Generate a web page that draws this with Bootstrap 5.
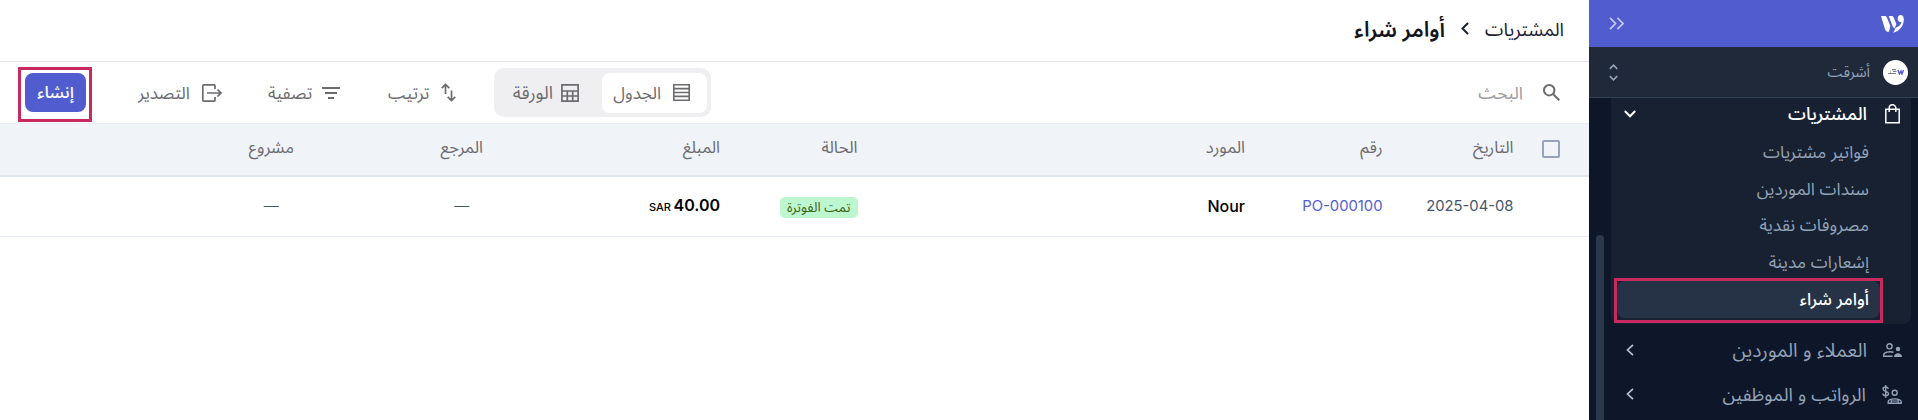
<!DOCTYPE html>
<html lang="ar" dir="rtl">

<head>
    <meta charset="UTF-8">
    <meta name="viewport" content="width=device-width, initial-scale=1.0">
    <title>أوامر شراء</title>
    <link href="https://cdn.jsdelivr.net/npm/bootstrap@5.3.2/dist/css/bootstrap.min.css" rel="stylesheet">
    <style>
        body {
            height: 420px;
            overflow: hidden;
            background: #fff;
            font-family: Inter, "Noto Sans Arabic", "DejaVu Sans", sans-serif;
            font-size: 17px;
            line-height: 24px;
            color: #6b6b70;
        }
        svg { display: block; flex-shrink: 0; }
        a { text-decoration: none; color: inherit; white-space: nowrap; }

        /* Sidebar */
        .sidebar { width: 329px; background: #0e1729; color: #94a3b8; }
        .brand-bar { height: 47px; background: #515dce; padding: 0 14px 0 20px; }
        .company { height: 51px; background: #1f293a; border-bottom: 1px solid #334155; padding: 0 10px 0 20px; }
        .company-logo { width: 25px; height: 25px; background: #fff; border-radius: 50%; margin-left: 13px; }
        .company-name { font-size: 14.5px; }
        .side-menu { width: 307px; }
        .thumb { width: 8px; margin: 137px 7px 0 0; background: #2b374a; border-radius: 4px 4px 0 0; }
        .open-group { height: 226px; margin-right: 7px; background: #172132; border-radius: 0 0 8px 8px; }
        .group-title { height: 32px; padding: 0 11px 0 13px; margin-bottom: 4px; color: #fff; font-size: 18px; font-weight: 500; }
        .group-name { margin-right: 18px; }
        .sub-item { height: 36.6px; padding-right: 42px; font-size: 17.1px; }
        .marked-item { width: 269px; height: 45px; border: 3px solid #c82a5f; margin: -2px 28px 0 0; }
        .active-item { height: 37px; padding: 0 11px 2px 0; border-radius: 8px; background: #263245; color: #fff; font-weight: 500; }
        .closed-group { height: 44px; padding: 0 16px 0 15px; font-size: 19.2px; }
        .closed-group-payroll { font-size: 18.4px; }

        /* Page header */
        .crumbs { height: 62px; border-bottom: 1px solid #e3e5ef; padding: 0 25px 4px; color: #1d2030; }
        .crumb-parent { font-size: 18.6px; }
        .crumb-current { font-size: 21.4px; font-weight: 600; color: #14161f; }

        /* Toolbar */
        .toolbar { height: 61px; padding: 0 29px 0 18px; }
        .search { color: #9b9ba0; margin-right: 20px; font-size: 17.4px; }
        .segment { width: 217px; height: 49px; padding: 0 4px 0 0; background: #efeff1; border-radius: 10px; margin-left: 38px; }
        .segment-on { width: 105px; height: 40px; padding-right: 17px; background: #fff; border-radius: 8px; }
        .segment-off { padding-right: 23px; font-size: 18px; }
        .create-frame { width: 74px; height: 55px; border: 3px solid #c82a5f; padding: 3px 3px 7px 4px; margin-top: 4px; }
        .btn-create { width: 61px; height: 39px; padding: 0; border-radius: 8px; background: #515dce; color: #fff; font-size: 17px; font-weight: 500; }
        .tool-sort { width: 68px; margin-left: 48px; }
        .tool-filter { width: 72px; margin-left: 46px; }
        .tool-export { width: 84px; margin-left: 46px; }

        /* Orders table */
        .orders { table-layout: fixed; width: 100%; white-space: nowrap; }
        .orders th { height: 52px; padding: 0 0 4px; background: #f0f3f8; border-top: 1px solid #e8edf3; border-bottom: 2px solid #dfe6ee; font-size: 16.6px; font-weight: 400; line-height: 20px; }
        .orders td { height: 61px; padding: 0 0 1px; border-bottom: 1px solid #e6ecf2; }
        .check-box { width: 18px; height: 18px; border: 2px solid #97a3b8; border-radius: 2px; margin: 4px 29px 0 0; }
        .date { font-size: 14.8px; color: #475569; }
        .number { font-size: 14.8px; color: #5560d0; }
        .supplier { font-size: 16px; font-weight: 500; color: #000; }
        .status { height: 21px; padding: 0 7px; border-radius: 5px; background: #bcf7d0; color: #3f6212; font-size: 13.300px; line-height: 21px; }
        .amount { font-size: 16px; font-weight: 600; color: #000; word-spacing: -1.500px; }
        .currency { font-size: 11px; font-weight: 500; }
        .orders .dash { font-size: 15px; font-weight: 300; color: #475569; }
    </style>
</head>

<body class="d-flex">

    <!-- Sidebar -->
    <aside class="sidebar d-flex flex-column flex-shrink-0 h-100">
        <div class="brand-bar d-flex align-items-center justify-content-between">
            <svg width="23" height="18" viewBox="0 0 23 18" fill="#fff">
                <path d="M0 1h3.500c1.300 0 2 .6 2.500 1.700L9.300 11 8 16.800C5.600 17 4.600 15.800 4 14.200z" />
                <path d="M7.700 1h2.800c1.200 0 1.900.6 2.300 1.700l2.600 6.500-2 4.300-1.700-2z" />
                <path d="M19.500 0C22 0 23 2 22.800 5c-.3 6-4 11-10.800 12.800 1.200-1.500 2-3.200 2.700-5.300 3.300-.7 5.300-2.700 5.800-5.700-2 .8-3.900-.7-3.900-3C16.600 1.600 17.800 0 19.500 0z" />
            </svg>
            <svg width="15" height="13" viewBox="0 0 15 13" fill="none" stroke="#c3c9f5" stroke-width="1.700">
                <path d="M1 .8 6.600 6.500 1 12.200M8.400.8 14 6.500 8.400 12.200" />
            </svg>
        </div>
        <div class="company d-flex align-items-center flex-shrink-0">
            <div class="company-logo d-flex align-items-center justify-content-center">
                <svg width="16" height="6" viewBox="0 0 16 6" fill="none">
                    <path d="M10 1l1.500 4L13 2l1 3 1.500-4" stroke="#515dce" stroke-width="1.400" />
                    <path d="M0 4.500h8M2 3h1M4 .7h4M5 2.500h3.500" stroke="#7a7f8c" stroke-width="1.200" />
                </svg>
            </div>
            <a href="#" class="company-name">أشرقت</a>
            <svg class="me-auto" width="9" height="17" viewBox="0 0 9 17" fill="none" stroke="#94a3b8" stroke-width="1.700">
                <path d="M.8 4.800 4.500 1.200 8.200 4.800M.8 12.200 4.500 15.800 8.200 12.200" />
            </svg>
        </div>
        <div class="d-flex flex-grow-1">
            <nav class="side-menu">
                <div class="open-group">
                    <div class="group-title d-flex align-items-center">
                        <svg width="15" height="20" viewBox="0 0 15 20" fill="none" stroke="#fff" stroke-width="1.500">
                            <path d="M.8 5.200h13.400v13.600H.8zM4.200 8V4a3.300 3.300 0 0 1 6.600 0v4" />
                        </svg>
                        <a href="#" class="group-name">المشتريات</a>
                        <svg class="me-auto" width="12" height="8" viewBox="0 0 12 8" fill="none" stroke="#fff" stroke-width="2">
                            <path d="M.8 1 6 6.300 11.200 1" />
                        </svg>
                    </div>
                    <div class="sub-item d-flex align-items-center"><a href="#">فواتير مشتريات</a></div>
                    <div class="sub-item d-flex align-items-center"><a href="#">سندات الموردين</a></div>
                    <div class="sub-item d-flex align-items-center"><a href="#">مصروفات نقدية</a></div>
                    <div class="sub-item d-flex align-items-center"><a href="#">إشعارات مدينة</a></div>
                    <div class="marked-item">
                        <div class="active-item d-flex align-items-center"><a href="#">أوامر شراء</a></div>
                    </div>
                </div>
                <div class="closed-group d-flex align-items-center mt-1">
                    <svg width="19" height="14" viewBox="0 0 19 14" fill="none" stroke="#94a3b8" stroke-width="1.400">
                        <circle cx="6.500" cy="3.300" r="2.600" />
                        <path d="M10.500 9.200C6 8 .7 9.400.7 12v1.200h8.800" />
                        <circle cx="15" cy="6" r="2.200" fill="#94a3b8" stroke="none" />
                        <path d="M11 14c0-5 8-5 8 0z" fill="#94a3b8" stroke="none" />
                    </svg>
                    <a href="#" class="me-3">العملاء و الموردين</a>
                    <svg class="me-auto" width="8" height="12" viewBox="0 0 8 12" fill="none" stroke="#b6c1d1" stroke-width="1.700">
                        <path d="M7 .8 1.500 6 7 11.200" />
                    </svg>
                </div>
                <div class="closed-group closed-group-payroll d-flex align-items-center">
                    <svg width="20" height="19" viewBox="0 0 20 19" fill="none" stroke="#94a3b8" stroke-width="1.400">
                        <path d="M6.200 4C5.800 1.300 1 1.300 1 4S6.500 6 6.500 8.700 1.200 11.300.8 8.700M3.700 0v12.700" />
                        <circle cx="12.700" cy="7.800" r="2.500" />
                        <path d="M6.200 18.200v-1.500c0-3.800 13-3.800 13 0v1.500z" />
                        <path d="M9.200 18v-3M16.200 18v-3M9.200 16h7" stroke-width="1.200" />
                    </svg>
                    <a href="#" class="me-3">الرواتب و الموظفين</a>
                    <svg class="me-auto" width="8" height="12" viewBox="0 0 8 12" fill="none" stroke="#b6c1d1" stroke-width="1.700">
                        <path d="M7 .8 1.500 6 7 11.200" />
                    </svg>
                </div>
            </nav>
            <div class="thumb"></div>
        </div>
    </aside>

    <!-- Purchase orders -->
    <main class="flex-grow-1">
        <div class="crumbs d-flex align-items-center">
            <a href="#" class="crumb-parent">المشتريات</a>
            <svg class="mx-3" width="8" height="13" viewBox="0 0 8 13" fill="none" stroke="#1d2030" stroke-width="2">
                <path d="M7 1 1.500 6.500 7 12" />
            </svg>
            <span class="crumb-current ms-auto">أوامر شراء</span>
        </div>

        <div class="toolbar d-flex align-items-center">
            <svg width="17" height="17" viewBox="0 0 17 17" fill="none" stroke="#6b6b70" stroke-width="2">
                <circle cx="6.200" cy="6.200" r="5.200" />
                <path d="M10 10l6.300 6.300" />
            </svg>
            <span class="search">البحث</span>

            <div class="segment d-flex align-items-center me-auto">
                <a href="#" class="segment-on d-flex align-items-center">
                    <svg width="17" height="17" viewBox="0 0 17 17" fill="none" stroke="#6b6b70" stroke-width="1.600">
                        <path d="M.8.8h15.400v15.400H.8zM1 4.600h15M1 8.500h15M1 12.400h15" />
                    </svg>
                    <span class="me-2 pe-1">الجدول</span>
                </a>
                <a href="#" class="segment-off d-flex align-items-center">
                    <svg width="18" height="18" viewBox="0 0 18 18" fill="none" stroke="#6b6b70" stroke-width="1.700">
                        <path d="M.9.9h16.200v16.200H.9zM1 7h16M1 12h16M6.300 7v10M11.700 7v10" />
                    </svg>
                    <span class="me-2">الورقة</span>
                </a>
            </div>

            <a href="#" class="tool-sort d-flex align-items-center justify-content-between">
                <svg width="15" height="19" viewBox="0 0 15 19" fill="none" stroke="#6b6b70" stroke-width="1.700">
                    <path d="M4.500 11V1.500M.7 5.200l3.800-3.800 3.800 3.800M10.500 7.500v10M6.700 13.800l3.800 3.800 3.800-3.800" />
                </svg>
                <span>ترتيب</span>
            </a>
            <a href="#" class="tool-filter d-flex align-items-center justify-content-between">
                <svg width="18" height="12" viewBox="0 0 18 12" fill="none" stroke="#6b6b70" stroke-width="1.800">
                    <path d="M0 1h18M3 6h12M6 11h6" />
                </svg>
                <span>تصفية</span>
            </a>
            <a href="#" class="tool-export d-flex align-items-center justify-content-between">
                <svg width="20" height="18" viewBox="0 0 20 18" fill="none" stroke="#6b6b70" stroke-width="1.700">
                    <path d="M13 5V2a1.200 1.200 0 0 0-1.200-1.200H2A1.200 1.200 0 0 0 .8 2v14A1.200 1.200 0 0 0 2 17.200h9.800A1.200 1.200 0 0 0 13 16v-3M5 9h14M15.500 5.500 19 9l-3.500 3.500" />
                </svg>
                <span>التصدير</span>
            </a>
            <div class="create-frame">
                <button type="button" class="btn btn-create d-block">إنشاء</button>
            </div>
        </div>

        <table class="orders">
            <colgroup>
                <col style="width: 75.5px">
                <col style="width: 131px">
                <col style="width: 137.5px">
                <col style="width: 387.5px">
                <col style="width: 137.5px">
                <col style="width: 163px">
                <col style="width: 190.5px">
                <col style="width: 190.5px">
                <col>
            </colgroup>
            <thead>
                <tr>
                    <th><div class="check-box"></div></th>
                    <th>التاريخ</th>
                    <th>رقم</th>
                    <th>المورد</th>
                    <th>الحالة</th>
                    <th>المبلغ</th>
                    <th class="text-center">المرجع</th>
                    <th class="text-center">مشروع</th>
                    <th></th>
                </tr>
            </thead>
            <tbody>
                <tr>
                    <td></td>
                    <td class="date">2025-04-08</td>
                    <td><a href="#" class="number">PO-000100</a></td>
                    <td class="supplier">Nour</td>
                    <td><span class="status d-inline-block">تمت الفوترة</span></td>
                    <td class="amount">40.00 <span class="currency">SAR</span></td>
                    <td class="dash text-center">—</td>
                    <td class="dash text-center">—</td>
                    <td></td>
                </tr>
            </tbody>
        </table>
    </main>

    <script src="https://cdn.jsdelivr.net/npm/bootstrap@5.3.2/dist/js/bootstrap.bundle.min.js"></script>
</body>

</html>
